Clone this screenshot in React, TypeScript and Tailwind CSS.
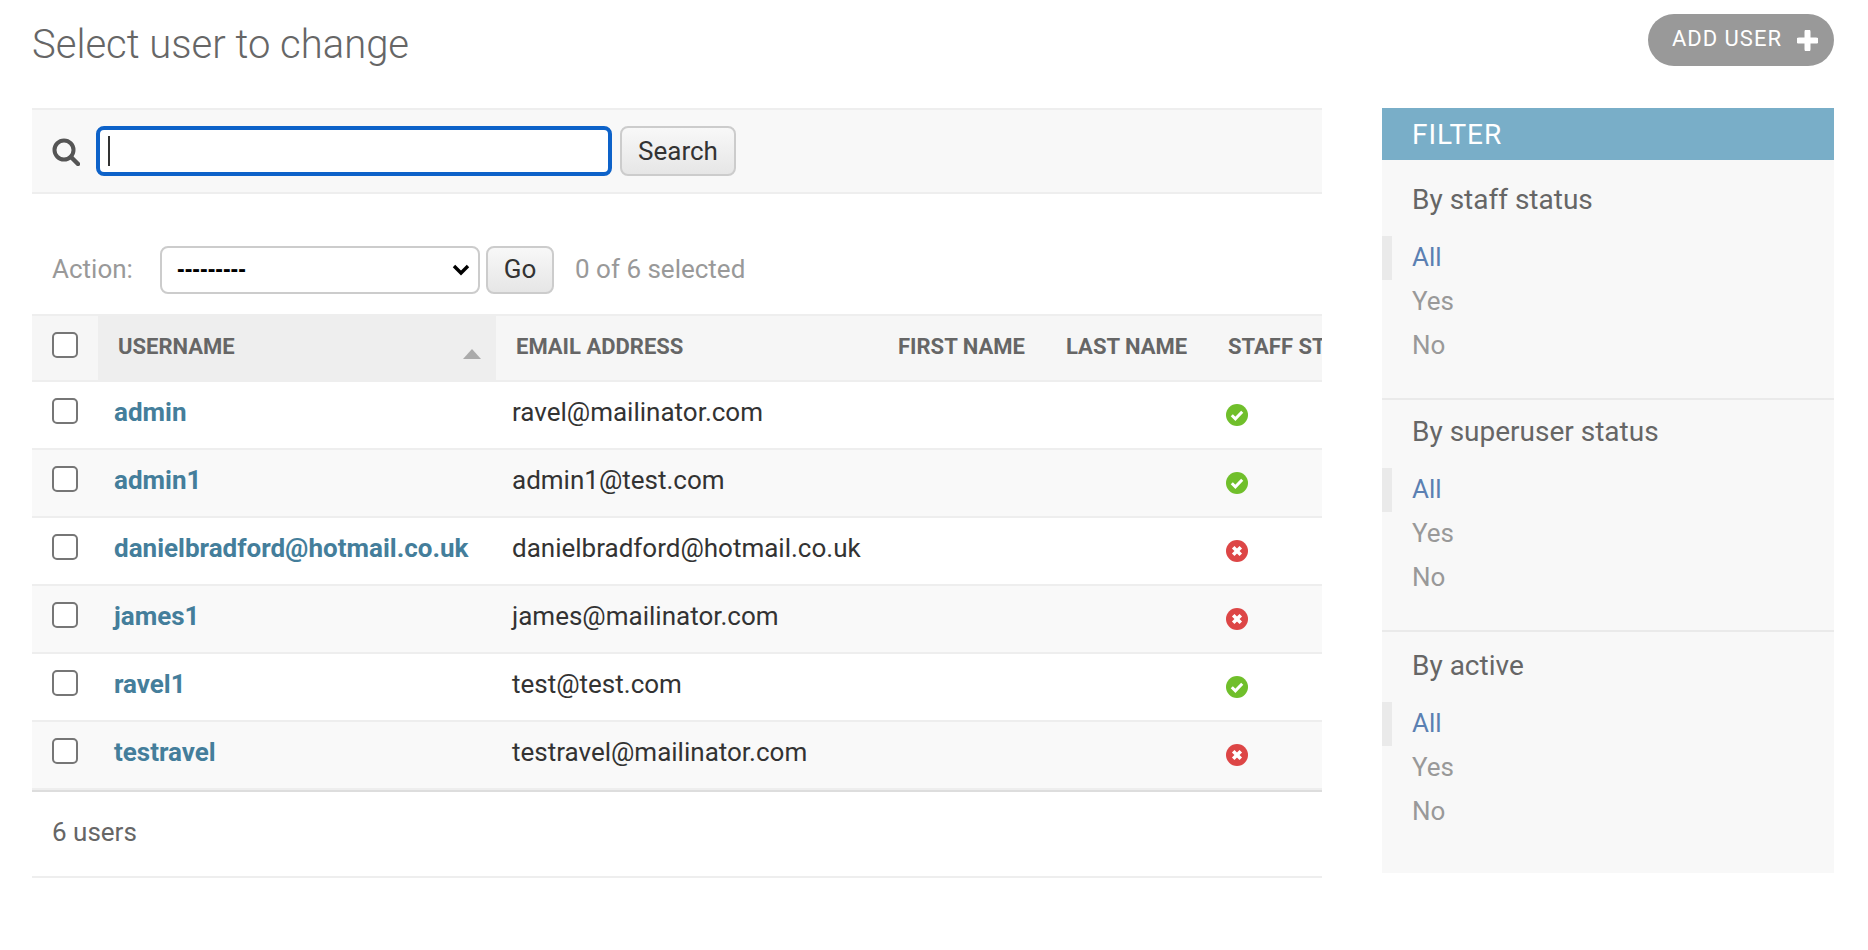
const users = [
  { name: 'admin', email: 'ravel@mailinator.com', staff: true },
  { name: 'admin1', email: 'admin1@test.com', staff: true },
  { name: 'danielbradford@hotmail.co.uk', email: 'danielbradford@hotmail.co.uk', staff: false },
  { name: 'james1', email: 'james@mailinator.com', staff: false },
  { name: 'ravel1', email: 'test@test.com', staff: true },
  { name: 'testravel', email: 'testravel@mailinator.com', staff: false },
];

const filters = [
  { title: 'By staff status', section: 'pt-[20px] border-b-2 border-[#eaeaea] h-[240px]' },
  { title: 'By superuser status', section: 'pt-[12px] border-b-2 border-[#eaeaea] h-[232px]' },
  { title: 'By active', section: 'pt-[14px] h-[241px]' },
];

function StatusIcon({ ok }: { ok: boolean }) {
  return (
    <svg width="22" height="22" viewBox="0 0 22 22" className="block">
      <circle cx="11" cy="11" r="11" fill={ok ? '#70bf2b' : '#dd4646'} />
      {ok ? (
        <path d="M5.8 11.2l3.6 3.6 6.8-7" fill="none" stroke="#fff" strokeWidth="3" />
      ) : (
        <path d="M7.2 7.2l7.6 7.6M14.8 7.2l-7.6 7.6" fill="none" stroke="#fff" strokeWidth="3.6" />
      )}
    </svg>
  );
}

function Checkbox() {
  return (
    <input
      type="checkbox"
      className="block appearance-none w-[26px] h-[26px] bg-white border-2 border-[#767676] rounded-[5px]"
    />
  );
}

function FilterPanel() {
  return (
    <aside className="w-[452px] h-[765px] shrink-0 bg-[#f8f8f8]">
      <h2 className="h-[52px] pl-[30px] bg-[#79aec8] text-white text-[28px] leading-[54px] tracking-[1px] uppercase">
        Filter
      </h2>
      {filters.map((f) => (
        <section key={f.title} className={f.section}>
          <h3 className="pl-[30px] h-[40px] mb-[16px] text-[28px] leading-[40px] text-[#666]">{f.title}</h3>
          <ul className="text-[26px] leading-[42px]">
            <li className="h-[44px] pl-[20px] border-l-[10px] border-[#eaeaea] text-[#5b80b2]">All</li>
            <li className="h-[44px] pl-[30px] text-[#999]">Yes</li>
            <li className="h-[44px] pl-[30px] text-[#999]">No</li>
          </ul>
        </section>
      ))}
    </aside>
  );
}

export default function App() {
  return (
    <div className="w-[1868px] h-[950px] overflow-hidden bg-white font-['Roboto',sans-serif] pl-[32px] pt-[14px]">
      <div className="flex justify-between w-[1802px] h-[94px]">
        <h1 className="pt-[9px] text-[40px] leading-[44px] font-light text-[#666]">Select user to change</h1>
        <a className="flex items-center h-[52px] pb-[4px] pl-[24px] pr-[16px] gap-[15px] rounded-full bg-[#999] text-white text-[22px] tracking-[1px] uppercase">
          ADD USER
          <svg width="21" height="21" viewBox="0 0 21 21" className="mt-[4px]">
            <path d="M10.5 2v17M2 10.5h17" stroke="#fff" strokeWidth="6" strokeLinecap="round" />
          </svg>
        </a>
      </div>

      <div className="flex gap-[60px]">
        <main className="w-[1290px] overflow-hidden">
          {/* Search */}
          <div className="flex items-center h-[86px] px-[20px] bg-[#f8f8f8] border-y-2 border-[#eee]">
            <svg width="28" height="28" viewBox="0 0 28 28" className="mr-[16px] mt-[2px]">
              <circle cx="12" cy="12" r="9.5" fill="none" stroke="#555" strokeWidth="4" />
              <path d="M19 19l7 7" stroke="#555" strokeWidth="4.4" strokeLinecap="round" />
            </svg>
            <div className="relative">
              <input
                type="text"
                className="block w-[516px] h-[50px] bg-white border-4 border-[#0d62c9] rounded-[8px] outline-none caret-transparent"
              />
              <span className="absolute left-[12px] top-[10px] w-[2px] h-[30px] bg-[#333]" />
            </div>
            <button className="ml-[8px] w-[116px] h-[50px] border-2 border-[#ccc] rounded-[8px] bg-gradient-to-b from-[#f8f8f8] to-[#e6e6e6] text-[26px] text-[#333]">
              Search
            </button>
          </div>

          {/* Actions */}
          <div className="flex items-center h-[120px] pl-[20px] pt-[31px]">
            <label className="w-[108px] pb-[1px] text-[26px] text-[#999]">Action:</label>
            <div className="relative">
              <select className="block appearance-none w-[320px] h-[48px] pl-[15px] bg-white border-2 border-[#ccc] rounded-[8px] text-[23px] font-bold text-black font-['Liberation_Sans',sans-serif]">
                <option>---------</option>
              </select>
              <svg width="18" height="12" viewBox="0 0 18 12" className="absolute right-[10px] top-[18px]">
                <path d="M2 2l7 7 7-7" fill="none" stroke="#000" strokeWidth="3.4" />
              </svg>
            </div>
            <button className="ml-[6px] w-[68px] h-[48px] border-2 border-[#ccc] rounded-[8px] bg-gradient-to-b from-[#f8f8f8] to-[#e6e6e6] text-[26px] text-[#333]">
              Go
            </button>
            <span className="ml-[21px] pb-[1px] text-[26px] text-[#999]">0 of 6 selected</span>
          </div>

          {/* Results */}
          <table className="table-fixed w-[1500px] border-separate border-spacing-0 border-b-2 border-[#ddd]">
            <colgroup>
              <col className="w-[66px]" />
              <col className="w-[398px]" />
              <col className="w-[382px]" />
              <col className="w-[168px]" />
              <col className="w-[162px]" />
              <col className="w-[324px]" />
            </colgroup>
            <thead>
              <tr className="text-left text-[22px] font-semibold text-[#666] uppercase">
                <th className="h-[68px] pl-[20px] pb-[6px] bg-[#f6f6f6] border-y-2 border-[#eee]">
                  <Checkbox />
                </th>
                <th className="relative pl-[20px] pb-[4px] bg-[#eee] border-y-2 border-[#eee]">
                  Username
                  <span className="absolute right-[15px] top-[33px] border-x-[9px] border-x-transparent border-b-[10px] border-b-[#aaa]" />
                </th>
                <th className="pl-[20px] pb-[4px] bg-[#f6f6f6] border-y-2 border-[#eee]">Email address</th>
                <th className="pl-[20px] pb-[4px] bg-[#f6f6f6] border-y-2 border-[#eee]">First name</th>
                <th className="pl-[20px] pb-[4px] bg-[#f6f6f6] border-y-2 border-[#eee]">Last name</th>
                <th className="pl-[20px] pb-[4px] bg-[#f6f6f6] border-y-2 border-[#eee]">Staff status</th>
              </tr>
            </thead>
            <tbody className="text-[26px] text-[#333]">
              {users.map((u, i) => (
                <tr key={u.name} className={i % 2 === 1 ? 'bg-[#f9f9f9]' : 'bg-white'}>
                  <td className="h-[68px] pl-[20px] pb-[8px] border-b-2 border-[#eee]">
                    <Checkbox />
                  </td>
                  <td className="pl-[16px] pb-[5px] border-b-2 border-[#eee] font-bold text-[#447e9b] whitespace-nowrap">
                    {u.name}
                  </td>
                  <td className="pl-[16px] pb-[5px] border-b-2 border-[#eee] whitespace-nowrap">{u.email}</td>
                  <td className="border-b-2 border-[#eee]" />
                  <td className="border-b-2 border-[#eee]" />
                  <td className="pl-[18px] border-b-2 border-[#eee]">
                    <StatusIcon ok={u.staff} />
                  </td>
                </tr>
              ))}
            </tbody>
          </table>

          <p className="h-[86px] pl-[20px] leading-[81px] text-[26px] text-[#666] border-b-2 border-[#eee]">6 users</p>
        </main>

        <FilterPanel />
      </div>
    </div>
  );
}
